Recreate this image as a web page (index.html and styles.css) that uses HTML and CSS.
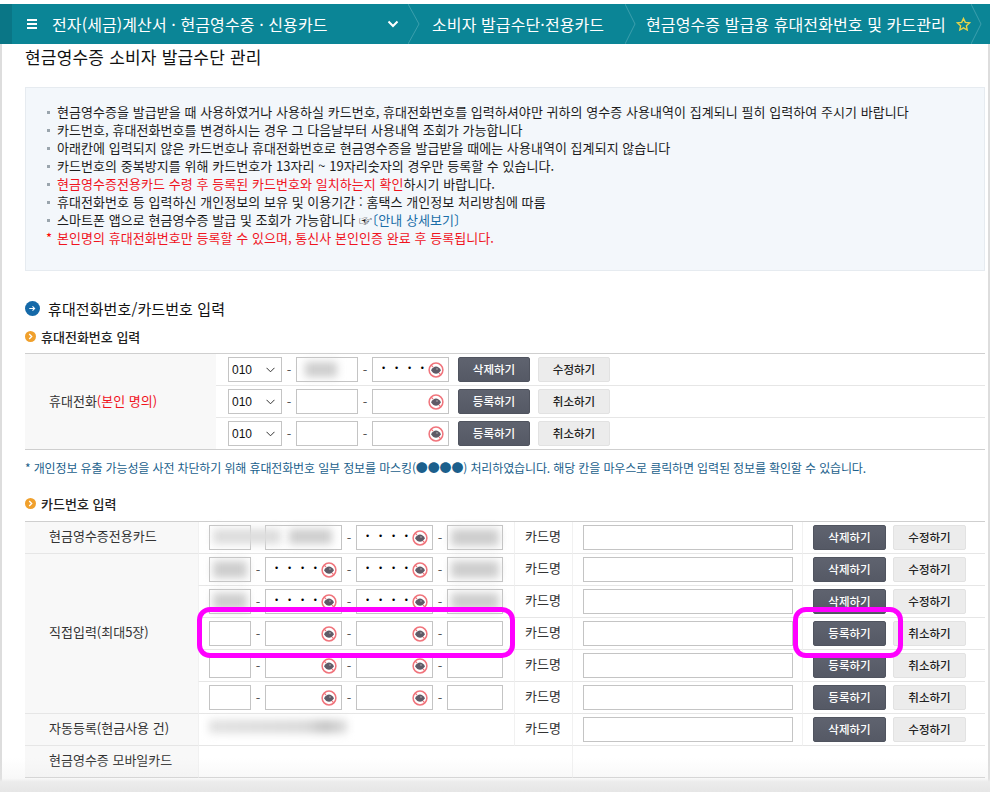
FILE: index.html
```html
<!DOCTYPE html>
<html lang="ko">
<head>
    <meta charset="UTF-8">
    <title>현금영수증 소비자 발급수단 관리</title>
    <link rel="stylesheet" href="styles.css">
</head>
<body>
    <svg class="defs" width="0" height="0">
        <symbol id="eye" viewBox="0 0 16 16">
            <path d="M3 8.300C4.500 5.700 6.200 4.600 8 4.600s3.500 1.100 5 3.700c-1.500 2.400-3.200 3.500-5 3.500s-3.500-1.100-5-3.500z" fill="#5f5a66"/>
            <circle cx="9" cy="7" r="1.100" fill="#8d8a92"/>
            <circle cx="8" cy="8" r="6.900" fill="none" stroke="#f0747c" stroke-width="1.500"/>
            <path d="M3.200 3.200 5 5M11 11l1.800 1.800" stroke="#f0747c" stroke-width="1.200"/>
        </symbol>
    </svg>

    <!-- Breadcrumb bar -->
    <header class="topbar">
        <svg class="menu-icon" width="10" height="10" viewBox="0 0 10 10"><path d="M0 1h10M0 5h10M0 9h10" stroke="#fff" stroke-width="2"/></svg>
        <span class="crumb crumb-first">전자(세금)계산서 · 현금영수증 · 신용카드</span>
        <svg class="chev-down" width="12" height="8" viewBox="0 0 12 8"><path d="M1.500 1.500 6 6l4.500-4.500" fill="none" stroke="#fff" stroke-width="2"/></svg>
        <svg class="crumb-sep" width="12" height="40" viewBox="0 0 12 40"><path d="M0 0 11 20 0 40" fill="none" stroke="#3c9fad"/></svg>
        <span class="crumb crumb-second">소비자 발급수단·전용카드</span>
        <svg class="crumb-sep" width="11" height="40" viewBox="0 0 11 40"><path d="M0 0 10 20 0 40" fill="none" stroke="#3c9fad"/></svg>
        <span class="crumb crumb-third">현금영수증 발급용 휴대전화번호 및 카드관리</span>
        <svg class="star" width="15" height="15" viewBox="0 0 15 15"><path d="M7.500 1.500 9.300 5.400l4.200.5-3.100 2.900.8 4.200-3.700-2.100-3.700 2.100.8-4.200L1.500 5.900l4.200-.5z" fill="none" stroke="#e6d44a" stroke-width="1.400"/></svg>
        <svg class="crumb-sep" width="11" height="40" viewBox="0 0 11 40"><path d="M0 0 10 20 0 40" fill="none" stroke="#3c9fad"/></svg>
    </header>

    <main class="content">
        <h1 class="page-title">현금영수증 소비자 발급수단 관리</h1>

        <!-- Notice -->
        <ul class="notice">
            <li>현금영수증을 발급받을 때 사용하였거나 사용하실 카드번호, 휴대전화번호를 입력하셔야만 귀하의 영수증 사용내역이 집계되니 필히 입력하여 주시기 바랍니다</li>
            <li>카드번호, 휴대전화번호를 변경하시는 경우 그 다음날부터 사용내역 조회가 가능합니다</li>
            <li>아래칸에 입력되지 않은 카드번호나 휴대전화번호로 현금영수증을 발급받을 때에는 사용내역이 집계되지 않습니다</li>
            <li>카드번호의 중복방지를 위해 카드번호가 13자리 ~ 19자리숫자의 경우만 등록할 수 있습니다.</li>
            <li><span class="red">현금영수증전용카드 수령 후 등록된 카드번호와 일치하는지 확인</span>하시기 바랍니다.</li>
            <li>휴대전화번호 등 입력하신 개인정보의 보유 및 이용기간 : 홈택스 개인정보 처리방침에 따름</li>
            <li>스마트폰 앱으로 현금영수증 발급 및 조회가 가능합니다 ☞<a class="guide-link" href="#guide">〔안내 상세보기〕</a></li>
            <li class="star-line red">본인명의 휴대전화번호만 등록할 수 있으며, 통신사 본인인증 완료 후 등록됩니다.</li>
        </ul>

        <h2 class="section-title">
            <svg width="15" height="15" viewBox="0 0 14 14"><circle cx="7" cy="7" r="7" fill="#1569a8"/><path d="M4 7h5M7 5l2 2-2 2" fill="none" stroke="#fff"/></svg>
            휴대전화번호/카드번호 입력
        </h2>

        <!-- Phone numbers -->
        <h3 class="sub-title">
            <svg width="11" height="11" viewBox="0 0 11 11"><circle cx="5.500" cy="5.500" r="5.500" fill="#f0a02c"/><path d="M4.200 3 6.700 5.500 4.200 8" fill="none" stroke="#fff" stroke-width="1.300"/></svg>
            휴대전화번호 입력
        </h3>
        <table class="form-table phone-table">
            <tr>
                <th rowspan="3" class="label">휴대전화<span class="red">(본인 명의)</span></th>
                <td>
                    <div class="row">
                        <select class="prefix"><option>010</option></select>
                        <span class="dash">-</span>
                        <div class="field w62"><input type="text"><i class="blur blur-mid"></i></div>
                        <span class="dash">-</span>
                        <div class="field w77"><input type="text" class="dots" value="••••"><svg class="eye"><use href="#eye"/></svg></div>
                        <button class="btn btn-dark btn-phone">삭제하기</button>
                        <button class="btn btn-light btn-phone">수정하기</button>
                    </div>
                </td>
            </tr>
            <tr>
                <td>
                    <div class="row">
                        <select class="prefix"><option>010</option></select>
                        <span class="dash">-</span>
                        <div class="field w62"><input type="text"></div>
                        <span class="dash">-</span>
                        <div class="field w77"><input type="text"><svg class="eye"><use href="#eye"/></svg></div>
                        <button class="btn btn-dark btn-phone">등록하기</button>
                        <button class="btn btn-light btn-phone">취소하기</button>
                    </div>
                </td>
            </tr>
            <tr>
                <td>
                    <div class="row">
                        <select class="prefix"><option>010</option></select>
                        <span class="dash">-</span>
                        <div class="field w62"><input type="text"></div>
                        <span class="dash">-</span>
                        <div class="field w77"><input type="text"><svg class="eye"><use href="#eye"/></svg></div>
                        <button class="btn btn-dark btn-phone">등록하기</button>
                        <button class="btn btn-light btn-phone">취소하기</button>
                    </div>
                </td>
            </tr>
        </table>
        <p class="mask-note">* 개인정보 유출 가능성을 사전 차단하기 위해 휴대전화번호 일부 정보를 마스킹(●●●●) 처리하였습니다. 해당 칸을 마우스로 클릭하면 입력된 정보를 확인할 수 있습니다.</p>

        <!-- Card numbers -->
        <h3 class="sub-title">
            <svg width="11" height="11" viewBox="0 0 11 11"><circle cx="5.500" cy="5.500" r="5.500" fill="#f0a02c"/><path d="M4.200 3 6.700 5.500 4.200 8" fill="none" stroke="#fff" stroke-width="1.300"/></svg>
            카드번호 입력
        </h3>
        <table class="form-table card-table">
            <colgroup>
                <col class="c-label"><col class="c-nums"><col class="c-name"><col class="c-input"><col>
            </colgroup>
            <tr>
                <th class="label">현금영수증전용카드</th>
                <td>
                    <div class="row">
                        <div class="field w42"><input type="text"><i class="blur blur-bridge"></i></div>
                        <span class="dash"></span>
                        <div class="field w77"><input type="text"><i class="blur blur-right"></i></div>
                        <span class="dash">-</span>
                        <div class="field w77"><input type="text" class="dots" value="••••"><svg class="eye"><use href="#eye"/></svg></div>
                        <span class="dash">-</span>
                        <div class="field w56"><input type="text"><i class="blur blur-fill"></i></div>
                    </div>
                </td>
                <td class="name-cell">카드명</td>
                <td class="input-cell"><input type="text" class="card-name"></td>
                <td><div class="row"><button class="btn btn-dark">삭제하기</button><button class="btn btn-light">수정하기</button></div></td>
            </tr>
            <tr>
                <th rowspan="5" class="label">직접입력(최대5장)</th>
                <td>
                    <div class="row">
                        <div class="field w42"><input type="text"><i class="blur blur-fill"></i></div>
                        <span class="dash">-</span>
                        <div class="field w77"><input type="text" class="dots" value="••••"><svg class="eye"><use href="#eye"/></svg></div>
                        <span class="dash">-</span>
                        <div class="field w77"><input type="text" class="dots" value="••••"><svg class="eye"><use href="#eye"/></svg></div>
                        <span class="dash">-</span>
                        <div class="field w56"><input type="text"><i class="blur blur-fill"></i></div>
                    </div>
                </td>
                <td class="name-cell">카드명</td>
                <td class="input-cell"><input type="text" class="card-name"></td>
                <td><div class="row"><button class="btn btn-dark">삭제하기</button><button class="btn btn-light">수정하기</button></div></td>
            </tr>
            <tr>
                <td>
                    <div class="row">
                        <div class="field w42"><input type="text"><i class="blur blur-fill"></i></div>
                        <span class="dash">-</span>
                        <div class="field w77"><input type="text" class="dots" value="••••"><svg class="eye"><use href="#eye"/></svg></div>
                        <span class="dash">-</span>
                        <div class="field w77"><input type="text" class="dots" value="••••"><svg class="eye"><use href="#eye"/></svg></div>
                        <span class="dash">-</span>
                        <div class="field w56"><input type="text"><i class="blur blur-fill"></i></div>
                    </div>
                </td>
                <td class="name-cell">카드명</td>
                <td class="input-cell"><input type="text" class="card-name"></td>
                <td><div class="row"><button class="btn btn-dark">삭제하기</button><button class="btn btn-light">수정하기</button></div></td>
            </tr>
            <tr>
                <td>
                    <div class="row">
                        <div class="field w42"><input type="text"></div>
                        <span class="dash">-</span>
                        <div class="field w77"><input type="text"><svg class="eye"><use href="#eye"/></svg></div>
                        <span class="dash">-</span>
                        <div class="field w77"><input type="text"><svg class="eye"><use href="#eye"/></svg></div>
                        <span class="dash">-</span>
                        <div class="field w56"><input type="text"></div>
                    </div>
                </td>
                <td class="name-cell">카드명</td>
                <td class="input-cell"><input type="text" class="card-name"></td>
                <td><div class="row"><button class="btn btn-dark">등록하기</button><button class="btn btn-light">취소하기</button></div></td>
            </tr>
            <tr>
                <td>
                    <div class="row">
                        <div class="field w42"><input type="text"></div>
                        <span class="dash">-</span>
                        <div class="field w77"><input type="text"><svg class="eye"><use href="#eye"/></svg></div>
                        <span class="dash">-</span>
                        <div class="field w77"><input type="text"><svg class="eye"><use href="#eye"/></svg></div>
                        <span class="dash">-</span>
                        <div class="field w56"><input type="text"></div>
                    </div>
                </td>
                <td class="name-cell">카드명</td>
                <td class="input-cell"><input type="text" class="card-name"></td>
                <td><div class="row"><button class="btn btn-dark">등록하기</button><button class="btn btn-light">취소하기</button></div></td>
            </tr>
            <tr>
                <td>
                    <div class="row">
                        <div class="field w42"><input type="text"></div>
                        <span class="dash">-</span>
                        <div class="field w77"><input type="text"><svg class="eye"><use href="#eye"/></svg></div>
                        <span class="dash">-</span>
                        <div class="field w77"><input type="text"><svg class="eye"><use href="#eye"/></svg></div>
                        <span class="dash">-</span>
                        <div class="field w56"><input type="text"></div>
                    </div>
                </td>
                <td class="name-cell">카드명</td>
                <td class="input-cell"><input type="text" class="card-name"></td>
                <td><div class="row"><button class="btn btn-dark">등록하기</button><button class="btn btn-light">취소하기</button></div></td>
            </tr>
            <tr>
                <th class="label">자동등록(현금사용 건)</th>
                <td><div class="row"><i class="blur blur-auto"></i></div></td>
                <td class="name-cell">카드명</td>
                <td class="input-cell"><input type="text" class="card-name"></td>
                <td><div class="row"><button class="btn btn-dark">삭제하기</button><button class="btn btn-light">수정하기</button></div></td>
            </tr>
            <tr>
                <th class="label">현금영수증 모바일카드</th>
                <td colspan="2"></td>
                <td colspan="2"></td>
            </tr>
        </table>
    </main>

    <!-- Annotation marks on top of the screenshot -->
    <div class="mark mark-fields"></div>
    <div class="mark mark-button"></div>
    <div class="bottom-fade"></div>
</body>
</html>
```

FILE: styles.css
```css
body {
    margin: 0;
    background: #fff;
    color: #1c1c1c;
    font-family: "Noto Sans CJK KR", "Noto Sans", sans-serif;
    font-size: 13px;
    position: relative;
    height: 792px;
    overflow: hidden;
}
.defs {
    position: absolute;
}

/* top bar */
.topbar {
    display: flex;
    align-items: center;
    height: 40px;
    margin-top: 4px;
    background: linear-gradient(to right, #0a7686 12px, #0b8596 12px);
    color: #fff;
}
.menu-icon {
    margin-left: 27px;
}
.crumb {
    font-size: 16px;
    letter-spacing: 0.1px;
    white-space: nowrap;
}
.crumb-first {
    width: 335px;
    margin-left: 15px;
}
.chev-down {
    margin-right: 9px;
}
.crumb-sep {
    flex: none;
}
.crumb-second {
    width: 193px;
    margin-left: 12px;
}
.crumb-third {
    width: 310px;
    margin-left: 10px;
}
.star {
    flex: none;
}

/* page body */
.content {
    border-left: 2px solid #ddd;
    border-right: 2px solid #ddd;
    padding: 0 3px 0 23px;
    height: 748px;
}
.page-title {
    margin: 0;
    height: 43px;
    padding-top: 2px;
    box-sizing: border-box;
    font-size: 17px;
    letter-spacing: 0.2px;
    line-height: 22px;
    font-weight: 400;
    color: #111;
}
.notice {
    list-style: none;
    margin: 0 0 28px;
    padding: 15px 0 24px 31px;
    height: 184px;
    box-sizing: border-box;
    background: #f3f7fb;
    border: 1px solid #e6ebf0;
}
.notice li {
    line-height: 18px;
    letter-spacing: 0.05px;
    white-space: nowrap;
    position: relative;
}
.notice li::before {
    content: "";
    position: absolute;
    left: -10px;
    top: 8px;
    width: 3px;
    height: 3px;
    background: #9aa5ad;
}
.notice .star-line::before {
    content: "*";
    left: -11px;
    top: 0;
    width: auto;
    height: auto;
    background: none;
    color: #f00;
}
.red {
    color: #f0141e;
}
.guide-link {
    margin-left: -7px;
    color: #1a6ea8;
    text-decoration: none;
}
.section-title {
    display: flex;
    align-items: center;
    gap: 8px;
    margin: -1px 0 9px;
    height: 20px;
    font-size: 15px;
    letter-spacing: 0.1px;
    font-weight: 400;
    color: #111;
}
.sub-title {
    display: flex;
    align-items: center;
    gap: 5px;
    margin: 0 0 6px;
    padding-bottom: 2px;
    box-sizing: border-box;
    height: 20px;
    font-size: 13px;
    font-weight: 500;
    color: #222;
}
.mask-note {
    margin: 9px 0 17px;
    line-height: 18px;
    font-size: 12px;
    letter-spacing: -0.13px;
    color: #1b5f8c;
    white-space: nowrap;
}

/* tables */
.form-table {
    width: 960px;
    border-collapse: separate;
    border-spacing: 0;
    table-layout: fixed;
    border-top: 1px solid #cfcfcf;
}
.card-table {
    margin-top: 7px;
}
.form-table th,
.form-table td {
    height: 32px;
    box-sizing: border-box;
    padding: 0;
    border-bottom: 1px solid #e6e6e6;
}
.form-table tr:last-child th,
.form-table tr:last-child td,
.form-table th[rowspan="3"] {
    border-bottom-color: #cfcfcf;
}
.form-table th.label {
    padding-bottom: 3px;
    background: #f8f8f8;
    font-weight: 400;
    text-align: left;
    color: #333;
}
.phone-table th.label {
    width: 191px;
    padding-left: 24px;
}
.phone-table td {
    padding-left: 12px;
}
.card-table th.label {
    padding-left: 24px;
    padding-bottom: 5px;
}
.c-label { width: 173px; }
.c-nums { width: 316px; }
.c-name { width: 58px; }
.c-input { width: 230px; }
.card-table td {
    padding-left: 10px;
    border-left: 1px solid #f1f1f1;
}
.card-table td:last-child {
    padding-left: 10px;
}
.card-table .name-cell {
    padding-left: 10px;
    padding-bottom: 5px;
    color: #333;
}
.card-table .input-cell {
    padding-left: 10px;
}
.row {
    display: flex;
    align-items: center;
    position: relative;
    height: 25px;
}

/* form bits */
input,
select {
    box-sizing: border-box;
    height: 25px;
    margin: 0;
    border: 1px solid #c4c4c4;
    background: #fff;
    font-family: "Liberation Sans", sans-serif;
    font-size: 12px;
    border-radius: 0;
}
.prefix {
    width: 54px;
    padding-left: 3px;
    color: #111;
    appearance: none;
    background: #fff url("data:image/svg+xml,%3Csvg xmlns='http://www.w3.org/2000/svg' width='9' height='6'%3E%3Cpath d='M.5.8 4.500 4.800 8.500.8' fill='none' stroke='%23333'/%3E%3C/svg%3E") no-repeat right 6px center;
}
.dash {
    flex: none;
    width: 14px;
    text-align: center;
    color: #555;
}
.field {
    flex: none;
    position: relative;
    height: 25px;
}
.field input {
    width: 100%;
    display: block;
}
.w42 { width: 42px; }
.w56 { width: 56px; }
.w62 { width: 62px; }
.w77 { width: 77px; }
.dots {
    padding: 0 0 3px 9px;
    font-size: 9px;
    letter-spacing: 9.800px;
    color: #000;
}
.eye {
    position: absolute;
    right: 5px;
    top: 5px;
    width: 16px;
    height: 16px;
}
.blur {
    position: absolute;
    background: #cdcdcd;
    filter: blur(4px);
}
.blur-fill {
    left: 4px;
    right: 4px;
    top: 4px;
    bottom: 4px;
}
.blur-bridge {
    z-index: 1;
    left: 4px;
    right: -30px;
    top: 4px;
    bottom: 6px;
    background: #dcdcdc;
}
.blur-right {
    left: 24px;
    right: 10px;
    top: 4px;
    bottom: 6px;
}
.blur-mid {
    left: 9px;
    width: 32px;
    top: 5px;
    bottom: 5px;
}
.blur-auto {
    left: 0;
    top: 3px;
    width: 138px;
    height: 13px;
    background: linear-gradient(to right, #e0e0e0, #d8d8d8 70%, #c2c2c2 85%, #dedede);
}
.card-name {
    width: 210px;
    display: block;
}
.btn {
    flex: none;
    width: 73px;
    height: 25px;
    padding: 0 0 2px;
    border-radius: 2px;
    font-family: inherit;
    font-size: 11.500px;
    font-weight: 500;
    cursor: pointer;
}
.btn + .btn {
    margin-left: 7px;
}
.btn-dark {
    border: 1px solid #50545f;
    background: linear-gradient(#5f636f, #555965);
    color: #fff;
}
.btn-light {
    border: 1px solid #e2e2e2;
    background: #ececec;
    color: #222;
}
.btn-phone {
    width: 72px;
}
.btn-dark.btn-phone {
    margin-left: 9px;
}
.btn-light.btn-phone {
    margin-left: 8px;
}

/* annotations */
.mark {
    position: absolute;
    top: 607px;
    height: 51px;
    box-sizing: border-box;
    border: 5px solid #f0f;
    border-radius: 13px;
}
.mark-fields {
    left: 197px;
    width: 318px;
}
.mark-button {
    left: 793px;
    width: 110px;
}
.bottom-fade {
    position: absolute;
    left: 0;
    right: 0;
    bottom: 0;
    height: 34px;
    background: linear-gradient(rgba(232, 232, 232, 0), rgba(232, 232, 232, 0.3) 60%, #ececec 70%, #e6e6e6);
    pointer-events: none;
}
```
